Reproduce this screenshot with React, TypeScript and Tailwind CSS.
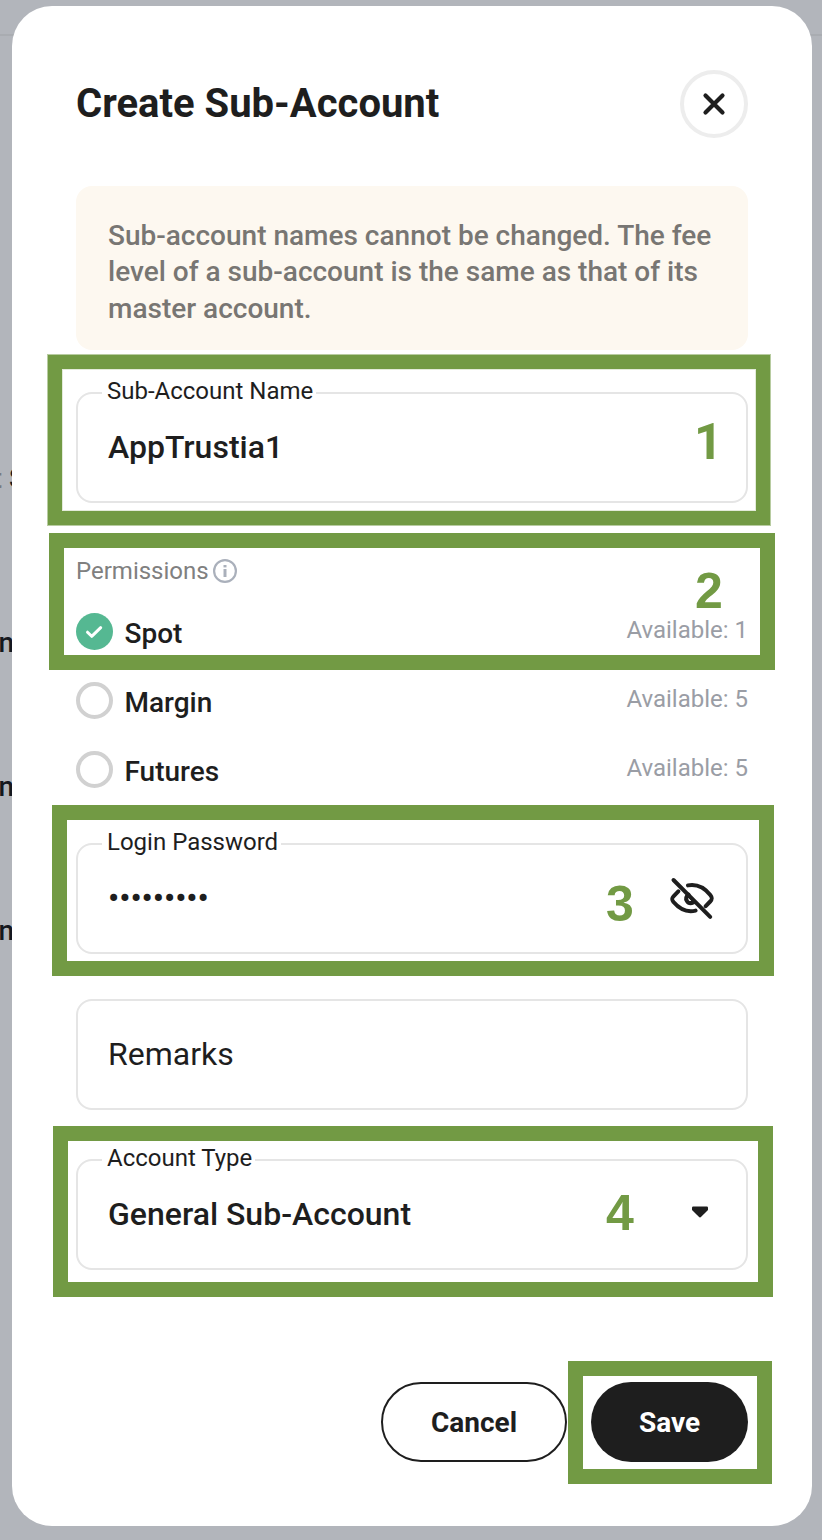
import type { ReactNode } from 'react';

function Field({ label, className, children }: { label?: string; className: string; children: ReactNode }) {
  return (
    <div className={`relative flex h-[111px] shrink-0 items-center rounded-2xl border-2 border-[#e5e5e5] pr-8 pl-[30px] ${className}`}>
      {label && (
        <span className="absolute -top-[19px] left-[24px] bg-white pr-[3px] pl-[5px] text-[24px] leading-8 whitespace-nowrap">{label}</span>
      )}
      {children}
    </div>
  );
}

function Permission({ name, count, checked }: { name: string; count: number; checked?: boolean }) {
  return (
    <div className="flex h-[69px] items-center">
      {checked ? (
        <svg className="size-[37px]" viewBox="0 0 37 37" fill="none">
          <circle cx="18.5" cy="18.5" r="18.5" fill="#55b892" />
          <path d="M11.5 19.2L15.7 23.3L24.7 14.7" stroke="white" strokeWidth="3" strokeLinecap="round" strokeLinejoin="round" />
        </svg>
      ) : (
        <span className="size-[37px] rounded-full border-4 border-[#d1d1d1]" />
      )}
      <span className="ml-[11.5px] pt-[5px] text-[28px] leading-9 font-medium">{name}</span>
      <span className="ml-auto pb-[3px] text-[24px] leading-8 text-[#9a9da5]">Available: {count}</span>
    </div>
  );
}

function Frame({ className }: { className: string }) {
  return <div className={`pointer-events-none absolute border-[#729a44] ${className}`} />;
}

function Step({ n, className }: { n: number; className: string }) {
  return (
    <span className={`pointer-events-none absolute text-[50px] leading-[50px] font-bold text-[#729a44] ${className}`}>{n}</span>
  );
}

export default function App() {
  return (
    <div className="relative h-[1540px] w-[822px] overflow-hidden bg-[#b2b5bb] px-3 pr-2.5 pt-1.5 font-[Roboto,sans-serif] text-[#1e1e1e]">
      <div className="absolute top-[34px] left-0 h-0.5 w-full bg-[#a9acb1]" />
      <span className="absolute top-[461px] right-[796px] text-[28px] leading-9 font-medium whitespace-nowrap text-[#15181e]"><span className="text-[#777b81]">t </span>S</span>
      <span className="absolute top-[625px] right-[808px] text-[28px] leading-9 font-medium text-[#15181e]">n</span>
      <span className="absolute top-[769px] right-[808px] text-[28px] leading-9 font-medium text-[#15181e]">n</span>
      <span className="absolute top-[913px] right-[808px] text-[28px] leading-9 font-medium text-[#15181e]">n</span>

      <main className="relative flex h-[1520px] w-[800px] flex-col rounded-[40px] bg-white px-16 pt-16">
        <header className="flex h-[68px] shrink-0 items-center justify-between">
          <h1 className="text-[40px] leading-[48px] font-bold">Create Sub-Account</h1>
          <button className="flex size-[68px] items-center justify-center rounded-full border-4 border-[#ededed]">
            <svg className="size-6 shrink-0" viewBox="0 0 24 24" fill="none" stroke="#1e1e1e" strokeWidth="4.2" strokeLinecap="round">
              <path d="M3.5 3.5L20.5 20.5M20.5 3.5L3.5 20.5" />
            </svg>
          </button>
        </header>

        <p className="mt-12 h-[164px] shrink-0 rounded-2xl bg-[#fdf8f0] px-8 pt-8 text-[28px] leading-[36.4px] font-medium text-[#787673]">
          Sub-account names cannot be changed. The fee level of a sub-account is the same as that of its master account.
        </p>

        <Field label="Sub-Account Name" className="mt-[42px]">
          <span className="mb-0.5 text-[32px] leading-10 font-medium">AppTrustia1</span>
        </Field>

        <div className="mt-[52px] flex h-8 shrink-0 items-center text-[24px] text-[#808080]">
          Permissions
          <svg className="ml-1 size-6" viewBox="0 0 24 24" fill="none">
            <circle cx="12" cy="12" r="10.9" stroke="#aab0bb" strokeWidth="2.2" />
            <path d="M12 10V18" stroke="#aab0bb" strokeWidth="3" />
            <path d="M12 6V8.4" stroke="#aab0bb" strokeWidth="3" />
          </svg>
        </div>
        <div className="mt-[10px] shrink-0">
          <Permission name="Spot" count={1} checked />
          <Permission name="Margin" count={5} />
          <Permission name="Futures" count={5} />
        </div>

        <Field label="Login Password" className="mt-[39px]">
          <span className="mb-0.5 text-[32px] leading-10 font-medium">•••••••••</span>
          <svg className="ml-auto size-[44px]" viewBox="0 0 44 44" fill="none" stroke="#1e1e1e" strokeWidth="4" strokeLinecap="round" strokeLinejoin="round">
            <path d="M3.500 3L40.200 39.800" />
            <path d="M18 8.400C28 6.600 35.500 12 40.300 18C42.500 20.800 42.300 22.300 40.200 24.500L35.700 29.200" />
            <path d="M8.300 14.300L3.500 19.300C1.500 21.500 1.600 22.500 3.500 25C9.500 32 16.500 35.800 25.600 33.600" />
            <path d="M18.500 17.500C13.500 21.500 17.500 28 23.500 25.500" />
            <path d="M18.500 18.500L23.500 24" strokeWidth="3" />
          </svg>
        </Field>

        <Field className="mt-[45px]">
          <span className="mb-0.5 text-[32px] leading-10">Remarks</span>
        </Field>

        <Field label="Account Type" className="mt-[49px]">
          <span className="mb-0.5 text-[32px] leading-10 font-medium">General Sub-Account</span>
          <svg className="mr-[6px] mb-[6px] ml-auto h-3 w-4" viewBox="0 0 16 12">
            <path d="M1.200 0.500H14.800Q16 .5 16 1.500V4L9.200 10.800Q8 12 6.800 10.800L0 4V1.500Q0 .5 1.200 .5Z" fill="#1e1e1e" />
          </svg>
        </Field>

        <footer className="mt-[112px] flex h-20 shrink-0 justify-end gap-6 text-[28px] font-bold">
          <button className="w-[186px] rounded-full border-2 border-[#1e1e1e] pt-0.5">Cancel</button>
          <button className="w-[157px] rounded-full bg-[#1e1e1e] pt-0.5 text-white">Save</button>
        </footer>
      </main>

      <Frame className="top-[355px] left-[48px] h-[170px] w-[722px] border-[14px] shadow-[0_0_0_1px_rgba(114,154,68,0.5),inset_0_0_0_1px_rgba(114,154,68,0.2)]" />
      <Frame className="top-[533px] left-[49px] h-[137px] w-[726px] border-[15px]" />
      <Frame className="top-[805px] left-[52px] h-[171px] w-[722px] border-[15px]" />
      <Frame className="top-[1126px] left-[53px] h-[171px] w-[720px] border-[15px]" />
      <Frame className="top-[1361px] left-[568px] h-[123px] w-[204px] border-[15px]" />
      <Step n={1} className="top-[417px] left-[694px]" />
      <Step n={2} className="top-[566px] left-[695px] font-['Liberation_Sans',sans-serif]" />
      <Step n={3} className="top-[879px] left-[606px] font-['Liberation_Sans',sans-serif]" />
      <Step n={4} className="top-[1188px] left-[606px] font-['Liberation_Sans',sans-serif]" />
    </div>
  );
}
